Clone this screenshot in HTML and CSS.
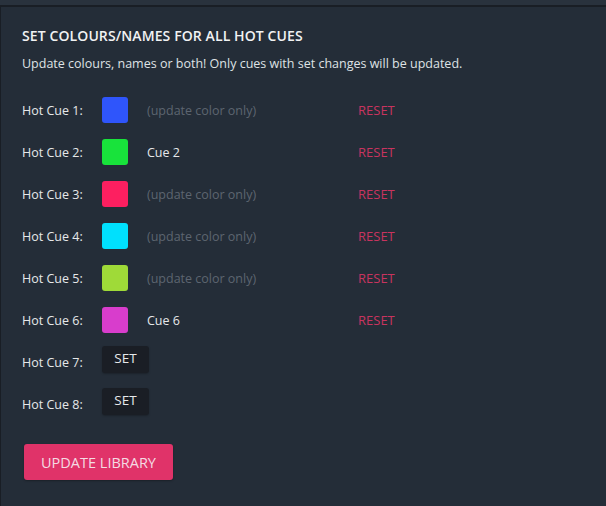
FILE: index.html
```html
<!DOCTYPE html>
<html lang="en">
<head>
    <meta charset="UTF-8">
    <title>Hot Cues</title>
    <link rel="stylesheet" href="styles.css">
</head>
<body>
    <div class="topbar"></div>
    <div class="panel">
        <h2>SET COLOURS/NAMES FOR ALL HOT CUES</h2>
        <p class="intro">Update colours, names or both! Only cues with set changes will be updated.</p>

        <div class="cue-row">
            <span class="cue-label">Hot Cue 1:</span>
            <span class="swatch" style="background:#2f55fb"></span>
            <span class="cue-name empty">(update color only)</span>
            <span class="reset">RESET</span>
        </div>
        <div class="cue-row">
            <span class="cue-label">Hot Cue 2:</span>
            <span class="swatch" style="background:#18e33b"></span>
            <span class="cue-name">Cue 2</span>
            <span class="reset">RESET</span>
        </div>
        <div class="cue-row">
            <span class="cue-label">Hot Cue 3:</span>
            <span class="swatch" style="background:#fd1f60"></span>
            <span class="cue-name empty">(update color only)</span>
            <span class="reset">RESET</span>
        </div>
        <div class="cue-row">
            <span class="cue-label">Hot Cue 4:</span>
            <span class="swatch" style="background:#00e0fd"></span>
            <span class="cue-name empty">(update color only)</span>
            <span class="reset">RESET</span>
        </div>
        <div class="cue-row">
            <span class="cue-label">Hot Cue 5:</span>
            <span class="swatch" style="background:#9fda38"></span>
            <span class="cue-name empty">(update color only)</span>
            <span class="reset">RESET</span>
        </div>
        <div class="cue-row">
            <span class="cue-label">Hot Cue 6:</span>
            <span class="swatch" style="background:#d83dcc"></span>
            <span class="cue-name">Cue 6</span>
            <span class="reset">RESET</span>
        </div>
        <div class="cue-row">
            <span class="cue-label">Hot Cue 7:</span>
            <button class="set-btn">SET</button>
        </div>
        <div class="cue-row">
            <span class="cue-label">Hot Cue 8:</span>
            <button class="set-btn">SET</button>
        </div>

        <button class="update-btn">UPDATE LIBRARY</button>
    </div>
</body>
</html>
```
FILE: styles.css
```css
html, body { height: 100%; }
body { margin: 0; background-color: #242d38; font-family: "Open Sans", "Liberation Sans", sans-serif; color: #e6e8ea; }
.topbar { height: 5px; background-color: #29323d; border-bottom: 2px solid #191e25; }
.panel { border-left: 1px solid #191e25; padding: 20px 0 0 21px; min-height: 100%; box-sizing: border-box; }
h2 { margin: 0; font-size: 14px; font-weight: 600; letter-spacing: 0.1px; color: #f1f2f3; line-height: 17px; }
.intro { margin: 12px 0 25px; font-size: 12.5px; line-height: 16px; color: #dfe2e5; }
.cue-row { display: flex; align-items: center; height: 26px; margin-bottom: 16px; font-size: 12.5px; }
.cue-label { width: 80px; }
.swatch { width: 26px; height: 26px; border-radius: 3px; }
.cue-name { width: 211px; margin-left: 19px; color: #e6e8ea; }
.cue-name.empty { color: #5d6570; }
.reset { color: #c8345f; font-size: 13px; }
.set-btn { width: 47px; height: 27px; margin-top: -6px; padding: 0 0 3px; border: none; border-radius: 3px; background-color: #1a1e25; color: #e6e8ea; font-family: inherit; font-size: 13.5px; box-shadow: 0 1px 2px rgba(0,0,0,0.25); }
.update-btn { margin: 11px 0 0 2px; width: 149px; height: 36px; border: none; border-radius: 3px; background-color: #e03369; color: #f4dbe3; font-family: inherit; font-size: 14.5px; padding: 0; box-shadow: 0 1px 2px rgba(0,0,0,0.3); }
```
